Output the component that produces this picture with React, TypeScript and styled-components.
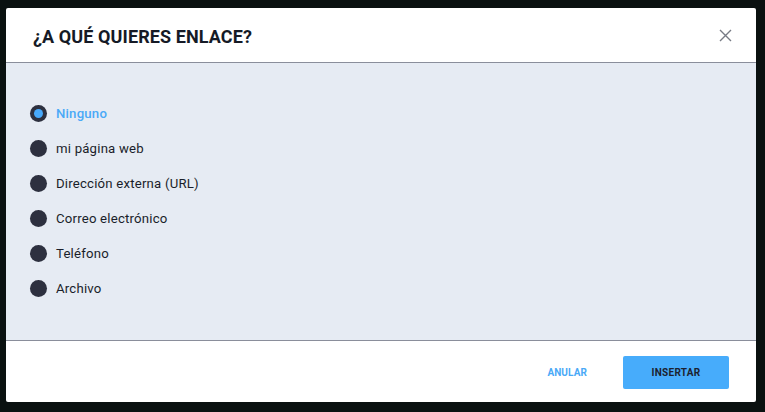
import React, { useState } from "react";
import styled, { createGlobalStyle } from "styled-components";

const Global = createGlobalStyle`
  html, body { margin: 0; padding: 0; background: #0a1110; }
  body { width: 765px; height: 412px; overflow: hidden; font-family: Roboto, "Liberation Sans", sans-serif; }
`;

const Backdrop = styled.div`
  width: 765px;
  height: 412px;
  box-sizing: border-box;
  padding: 8px 9px 10px 6px;
  background: #0a1110;
`;

const Dialog = styled.div`
  width: 750px;
  height: 394px;
  display: flex;
  flex-direction: column;
  background: #ffffff;
  border-radius: 2px;
  overflow: hidden;
`;

const Header = styled.div`
  height: 54px;
  flex: none;
  display: flex;
  align-items: center;
  justify-content: space-between;
  padding: 0 23px 0 27px;
  border-bottom: 1px solid #8a8e9b;
`;

const Title = styled.h1`
  margin: 0;
  padding-top: 2px;
  font-family: Roboto, "Liberation Sans", sans-serif;
  font-weight: 700;
  font-size: 18px;
  letter-spacing: 0.1px;
  color: #151a26;
`;

const Close = styled.button`
  width: 16px;
  height: 16px;
  padding: 0;
  border: none;
  background: transparent;
  display: flex;
  align-items: center;
  justify-content: center;
  cursor: pointer;
`;

const Body = styled.div`
  flex: 1;
  background: #e6ebf3;
  padding: 33px 24px 0 24px;
  display: flex;
  flex-direction: column;
  border-bottom: 1px solid #8a8e9b;
`;

const Option = styled.label`
  height: 35px;
  display: flex;
  align-items: center;
  gap: 9px;
  cursor: pointer;
`;

const Dot = styled.span<{ $on: boolean }>`
  width: 17px;
  height: 17px;
  border-radius: 50%;
  background: #2d303f;
  display: flex;
  align-items: center;
  justify-content: center;
  flex: none;
  &::after {
    content: "";
    width: 9px;
    height: 9px;
    border-radius: 50%;
    background: ${(p) => (p.$on ? "#47a9fb" : "transparent")};
  }
`;

const Label = styled.span<{ $on: boolean }>`
  font-family: Roboto, "Liberation Sans", sans-serif;
  font-size: 13.2px;
  font-weight: ${(p) => (p.$on ? 500 : 400)};
  color: ${(p) => (p.$on ? "#4aa9f7" : "#1a1e2a")};
  letter-spacing: 0.2px;
`;

const Footer = styled.div`
  height: 61px;
  flex: none;
  display: flex;
  align-items: center;
  justify-content: flex-end;
  padding: 0 27px 0 0;
  gap: 36px;
`;

const TextButton = styled.button`
  border: none;
  background: transparent;
  font-family: Roboto, "Liberation Sans", sans-serif;
  font-weight: 700;
  font-size: 10px;
  color: #4aa9f7;
  letter-spacing: 0.1px;
  padding: 0;
  margin-top: 1px;
  cursor: pointer;
`;

const PrimaryButton = styled.button`
  width: 106px;
  height: 33px;
  margin-top: 2px;
  border: none;
  border-radius: 2px;
  background: #47acfb;
  font-family: Roboto, "Liberation Sans", sans-serif;
  font-weight: 700;
  font-size: 10px;
  color: #1c2230;
  letter-spacing: 0.3px;
  cursor: pointer;
`;

const options = [
  "Ninguno",
  "mi página web",
  "Dirección externa (URL)",
  "Correo electrónico",
  "Teléfono",
  "Archivo",
];

export default function App() {
  const [sel, setSel] = useState(0);
  return (
    <>
      <Global />
      <Backdrop>
        <Dialog>
          <Header>
            <Title>¿A QUÉ QUIERES ENLACE?</Title>
            <Close aria-label="Cerrar">
              <svg width="13" height="13" viewBox="0 0 13 13">
                <path d="M1 1L12 12M12 1L1 12" stroke="#777b85" strokeWidth="1.4" fill="none" />
              </svg>
            </Close>
          </Header>
          <Body>
            {options.map((o, i) => (
              <Option key={o} onClick={() => setSel(i)}>
                <Dot $on={sel === i} />
                <Label $on={sel === i}>{o}</Label>
              </Option>
            ))}
          </Body>
          <Footer>
            <TextButton>ANULAR</TextButton>
            <PrimaryButton>INSERTAR</PrimaryButton>
          </Footer>
        </Dialog>
      </Backdrop>
    </>
  );
}
